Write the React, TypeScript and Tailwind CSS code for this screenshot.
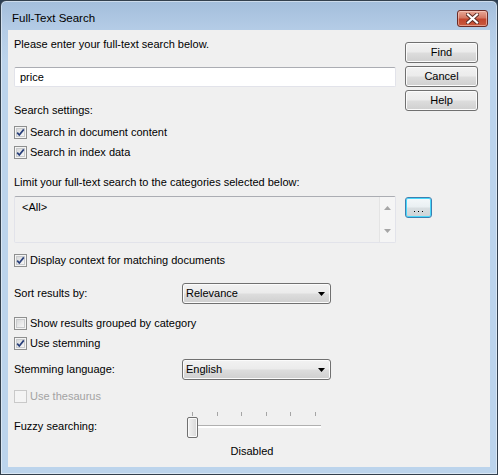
import React from "react";

function CheckBox({ checked, disabled }: { checked?: boolean; disabled?: boolean }) {
  return (
    <span
      className={`relative grid h-[13px] w-[13px] shrink-0 place-items-center border ${
        disabled ? "border-[#c9c9c9] bg-[#f4f4f4]" : "border-[#8e8f8f] bg-[#f4f4f4]"
      }`}
    >
      {!disabled && (
        <span className="h-[9px] w-[9px] border border-[#c9cbcd] bg-gradient-to-br from-[#d8d9da] to-[#f7f7f7]" />
      )}
      {checked && (
        <svg className="absolute left-0 top-0" width="11" height="11" viewBox="0 0 11 11">
          <path d="M2.2 5.6 L4.3 8 L8.8 2.4" fill="none" stroke="#283f7a" strokeWidth="1.7" />
        </svg>
      )}
    </span>
  );
}

function CheckRow({
  label,
  checked,
  disabled,
  className = "",
}: {
  label: string;
  checked?: boolean;
  disabled?: boolean;
  className?: string;
}) {
  return (
    <div className={`flex items-center gap-[3px] ${className}`}>
      <CheckBox checked={checked} disabled={disabled} />
      <span className={`leading-[13px] ${disabled ? "text-[#a3a3a3]" : ""}`}>{label}</span>
    </div>
  );
}

function PushButton({ children, className = "" }: { children: React.ReactNode; className?: string }) {
  return (
    <div
      className={`flex h-[21px] items-center justify-center rounded-[3px] border border-[#707070] bg-[linear-gradient(180deg,#f2f2f2_0%,#ebebeb_48%,#dddddd_52%,#cfcfcf_100%)] leading-[13px] shadow-[inset_0_0_0_1px_#fbfbfb] ${className}`}
    >
      {children}
    </div>
  );
}

function Combo({ value }: { value: string }) {
  return (
    <div className="flex h-[21px] w-[149px] items-center justify-between rounded-[3px] border border-[#707070] bg-[linear-gradient(180deg,#f2f2f2_0%,#ebebeb_48%,#dddddd_52%,#cfcfcf_100%)] pl-[3px] pr-[5px] shadow-[inset_0_0_0_1px_#fbfbfb]">
      <span className="leading-[13px]">{value}</span>
      <svg width="7" height="4" viewBox="0 0 7 4">
        <path d="M0 0 H7 L3.5 4 Z" fill="#000" />
      </svg>
    </div>
  );
}

export default function App() {
  const ticks = [10, 35, 59, 84, 108, 133];
  return (
    <div className="h-[475px] w-[498px] bg-[#2c3e52] font-['Liberation_Sans',Arial,sans-serif] text-[11px] text-black">
      <div className="flex h-full flex-col rounded-t-[6px] border border-[#33404d] bg-[linear-gradient(180deg,#a3bedb_0px,#b4cce6_28px,#bcd4ec_60px,#bcd4ec_100%)] shadow-[inset_0_0_0_1px_rgba(255,255,255,0.45)]">
        {/* title bar */}
        <div className="flex h-[29px] shrink-0 items-start justify-between pl-[11px] pr-[9px]">
          <span className="pt-[10px] text-[11.5px] leading-[14px]">Full-Text Search</span>
          <div className="mt-[9px] flex h-[17px] w-[31px] items-center justify-center rounded-[3px] border border-[#6b2b26] bg-[linear-gradient(180deg,#e8a998_0%,#d47763_45%,#c2452d_55%,#c95a3f_100%)] shadow-[inset_0_0_0_1px_rgba(255,220,210,0.5)]">
            <svg width="13" height="11" viewBox="0 0 13 11">
              <path d="M2 1.5 L11 9.5 M11 1.5 L2 9.5" stroke="#5a2a24" strokeWidth="4" strokeLinecap="square" />
              <path d="M2 1.5 L11 9.5 M11 1.5 L2 9.5" stroke="#ffffff" strokeWidth="2.2" strokeLinecap="square" />
            </svg>
          </div>
        </div>

        {/* client area */}
        <div className="mx-[7px] mb-[7px] flex-1 bg-[#f0f0f0] pl-[6px]">
          <div className="flex">
            <div className="w-[382px]">
              <div className="mt-[8px] leading-[13px]">Please enter your full-text search below.</div>
              <div className="mt-[16px] flex h-[20px] items-center rounded-[2px] border border-[#e2e3ea] border-t-[#abadb3] bg-white pl-[5px]">
                <span className="leading-[13px]">price</span>
              </div>
              <div className="mt-[17px] leading-[13px]">Search settings:</div>
              <CheckRow className="mt-[9px]" checked label="Search in document content" />
              <CheckRow className="mt-[7px]" checked label="Search in index data" />
            </div>
            <div className="ml-[9px] flex w-[73px] flex-col gap-[3px] pt-[12px]">
              <PushButton>Find</PushButton>
              <PushButton>Cancel</PushButton>
              <PushButton>Help</PushButton>
            </div>
          </div>

          <div className="mt-[17px] leading-[13px]">Limit your full-text search to the categories selected below:</div>
          <div className="mt-[7px] flex items-start">
            <div className="flex h-[47px] w-[382px] rounded-[2px] border border-[#e2e3ea] border-t-[#abadb3] bg-[#f0f0f0]">
              <div className="flex-1 pl-[7px] pt-[4px] leading-[13px]">&lt;All&gt;</div>
              <div className="flex w-[16px] flex-col items-center justify-between border-l border-[#e4e4e4] bg-[#f5f5f5] py-[9px]">
                <svg width="7" height="4" viewBox="0 0 7 4">
                  <path d="M3.5 0 L7 4 H0 Z" fill="#a6a6a6" />
                </svg>
                <svg width="7" height="4" viewBox="0 0 7 4">
                  <path d="M0 0 H7 L3.5 4 Z" fill="#a6a6a6" />
                </svg>
              </div>
            </div>
            <div className="ml-[9px] mt-[1px] flex h-[21px] w-[27px] items-end justify-center gap-[3px] rounded-[3px] border border-[#3c7fb1] bg-[linear-gradient(180deg,#f4f8fa_0%,#e9eff2_48%,#d9dfe2_52%,#cdd3d6_100%)] pb-[5px] shadow-[inset_0_0_0_1px_#48d8fb]">
              <span className="h-[1px] w-[1px] bg-black" />
              <span className="h-[1px] w-[1px] bg-black" />
              <span className="h-[1px] w-[1px] bg-black" />
            </div>
          </div>

          <CheckRow className="mt-[11px]" checked label="Display context for matching documents" />

          <div className="mt-[16px] flex items-center">
            <span className="w-[168px] leading-[13px]">Sort results by:</span>
            <Combo value="Relevance" />
          </div>

          <CheckRow className="mt-[13px]" label="Show results grouped by category" />
          <CheckRow className="mt-[7px]" checked label="Use stemming" />

          <div className="mt-[9px] flex items-center">
            <span className="w-[168px] leading-[13px]">Stemming language:</span>
            <Combo value="English" />
          </div>

          <CheckRow className="mt-[10px]" disabled label="Use thesaurus" />

          <div className="mt-[7px] flex items-start">
            <span className="w-[168px] pt-[10px] leading-[13px]">Fuzzy searching:</span>
            <div className="flex w-[140px] flex-col">
              <div className="relative h-[30px]">
                {ticks.map((x) => (
                  <span key={x} className="absolute top-[2px] h-[4px] w-px bg-[#a5a5a5]" style={{ left: x }} />
                ))}
                <span className="absolute left-[5px] top-[15px] h-[3px] w-[134px] border-t border-[#b0b0b0] bg-white" />
                <span className="absolute left-[5px] top-[7px] h-[21px] w-[11px] rounded-[2px] border border-[#707070] bg-[linear-gradient(90deg,#f2f2f2,#d8d8d8)] shadow-[inset_0_0_0_1px_#fafafa]" />
              </div>
              <div className="mt-[5px] text-center leading-[13px]">Disabled</div>
            </div>
          </div>
        </div>
      </div>
    </div>
  );
}
